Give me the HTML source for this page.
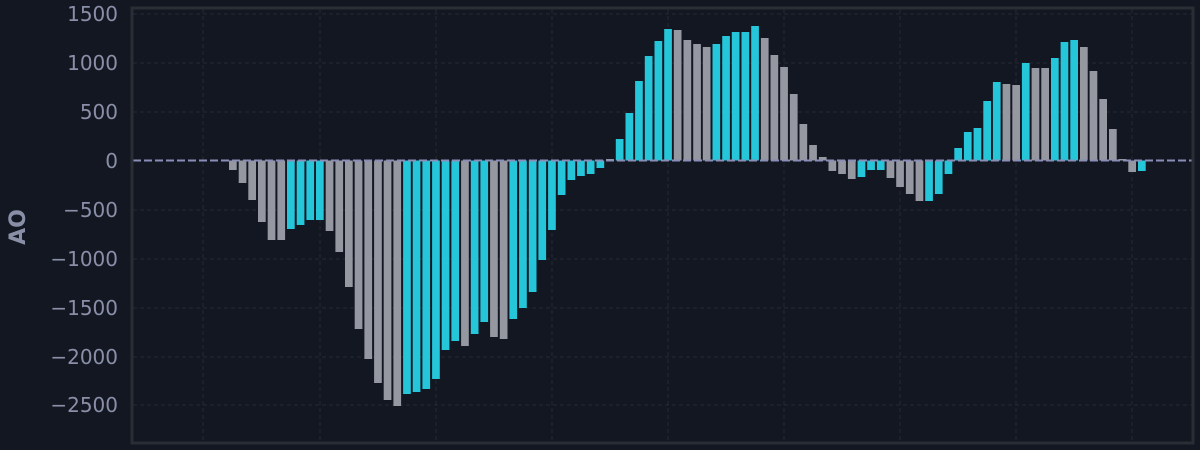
<!DOCTYPE html>
<html><head><meta charset="utf-8"><style>
html,body{margin:0;padding:0;background:#131722;}
svg{display:block;}
text{font-family:"DejaVu Sans","Liberation Sans",sans-serif;fill:#8a8fa8;}
</style></head><body>
<svg width="1200" height="450" viewBox="0 0 1200 450" xmlns="http://www.w3.org/2000/svg">
<rect width="1200" height="450" fill="#131722"/>
<g stroke="#262a33" stroke-width="1" stroke-dasharray="4,3">
<line x1="133" x2="1193" y1="14" y2="14"/><line x1="133" x2="1193" y1="63" y2="63"/><line x1="133" x2="1193" y1="112" y2="112"/><line x1="133" x2="1193" y1="210" y2="210"/><line x1="133" x2="1193" y1="259" y2="259"/><line x1="133" x2="1193" y1="308" y2="308"/><line x1="133" x2="1193" y1="357" y2="357"/><line x1="133" x2="1193" y1="405" y2="405"/>
<line y1="9" y2="443" x1="203" x2="203"/><line y1="9" y2="443" x1="320" x2="320"/><line y1="9" y2="443" x1="436" x2="436"/><line y1="9" y2="443" x1="552" x2="552"/><line y1="9" y2="443" x1="668" x2="668"/><line y1="9" y2="443" x1="784" x2="784"/><line y1="9" y2="443" x1="900" x2="900"/><line y1="9" y2="443" x1="1016" x2="1016"/><line y1="9" y2="443" x1="1132" x2="1132"/>
</g>
<g>
<rect x="229.0" y="160.5" width="7.7" height="9.5" fill="#9598a1"/>
<rect x="238.7" y="160.5" width="7.7" height="22.5" fill="#9598a1"/>
<rect x="248.3" y="160.5" width="7.7" height="39.5" fill="#9598a1"/>
<rect x="258.0" y="160.5" width="7.7" height="61.5" fill="#9598a1"/>
<rect x="267.7" y="160.5" width="7.7" height="79.5" fill="#9598a1"/>
<rect x="277.4" y="160.5" width="7.7" height="79.5" fill="#9598a1"/>
<rect x="287.0" y="160.5" width="7.7" height="68.5" fill="#26c6da"/>
<rect x="296.7" y="160.5" width="7.7" height="64.5" fill="#26c6da"/>
<rect x="306.4" y="160.5" width="7.7" height="59.5" fill="#26c6da"/>
<rect x="316.0" y="160.5" width="7.7" height="59.5" fill="#26c6da"/>
<rect x="325.7" y="160.5" width="7.7" height="70.5" fill="#9598a1"/>
<rect x="335.4" y="160.5" width="7.7" height="91.5" fill="#9598a1"/>
<rect x="345.0" y="160.5" width="7.7" height="126.5" fill="#9598a1"/>
<rect x="354.7" y="160.5" width="7.7" height="168.5" fill="#9598a1"/>
<rect x="364.4" y="160.5" width="7.7" height="198.5" fill="#9598a1"/>
<rect x="374.1" y="160.5" width="7.7" height="222.5" fill="#9598a1"/>
<rect x="383.7" y="160.5" width="7.7" height="239.5" fill="#9598a1"/>
<rect x="393.4" y="160.5" width="7.7" height="245.5" fill="#9598a1"/>
<rect x="403.1" y="160.5" width="7.7" height="233.5" fill="#26c6da"/>
<rect x="412.7" y="160.5" width="7.7" height="231.5" fill="#26c6da"/>
<rect x="422.4" y="160.5" width="7.7" height="228.5" fill="#26c6da"/>
<rect x="432.1" y="160.5" width="7.7" height="218.5" fill="#26c6da"/>
<rect x="441.7" y="160.5" width="7.7" height="189.5" fill="#26c6da"/>
<rect x="451.4" y="160.5" width="7.7" height="180.5" fill="#26c6da"/>
<rect x="461.1" y="160.5" width="7.7" height="185.5" fill="#9598a1"/>
<rect x="470.8" y="160.5" width="7.7" height="173.5" fill="#26c6da"/>
<rect x="480.4" y="160.5" width="7.7" height="161.5" fill="#26c6da"/>
<rect x="490.1" y="160.5" width="7.7" height="176.5" fill="#9598a1"/>
<rect x="499.8" y="160.5" width="7.7" height="178.5" fill="#9598a1"/>
<rect x="509.4" y="160.5" width="7.7" height="158.5" fill="#26c6da"/>
<rect x="519.1" y="160.5" width="7.7" height="147.5" fill="#26c6da"/>
<rect x="528.8" y="160.5" width="7.7" height="131.5" fill="#26c6da"/>
<rect x="538.4" y="160.5" width="7.7" height="99.5" fill="#26c6da"/>
<rect x="548.1" y="160.5" width="7.7" height="69.5" fill="#26c6da"/>
<rect x="557.8" y="160.5" width="7.7" height="34.5" fill="#26c6da"/>
<rect x="567.5" y="160.5" width="7.7" height="19.5" fill="#26c6da"/>
<rect x="577.1" y="160.5" width="7.7" height="15.5" fill="#26c6da"/>
<rect x="586.8" y="160.5" width="7.7" height="13.5" fill="#26c6da"/>
<rect x="596.5" y="160.5" width="7.7" height="7.5" fill="#26c6da"/>
<rect x="606.1" y="159" width="7.7" height="1.5" fill="#9598a1"/>
<rect x="615.8" y="139" width="7.7" height="21.5" fill="#26c6da"/>
<rect x="625.5" y="113" width="7.7" height="47.5" fill="#26c6da"/>
<rect x="635.1" y="81" width="7.7" height="79.5" fill="#26c6da"/>
<rect x="644.8" y="56" width="7.7" height="104.5" fill="#26c6da"/>
<rect x="654.5" y="41" width="7.7" height="119.5" fill="#26c6da"/>
<rect x="664.2" y="29" width="7.7" height="131.5" fill="#26c6da"/>
<rect x="673.8" y="30" width="7.7" height="130.5" fill="#9598a1"/>
<rect x="683.5" y="40" width="7.7" height="120.5" fill="#9598a1"/>
<rect x="693.2" y="44" width="7.7" height="116.5" fill="#9598a1"/>
<rect x="702.8" y="47" width="7.7" height="113.5" fill="#9598a1"/>
<rect x="712.5" y="44" width="7.7" height="116.5" fill="#26c6da"/>
<rect x="722.2" y="36" width="7.7" height="124.5" fill="#26c6da"/>
<rect x="731.8" y="32" width="7.7" height="128.5" fill="#26c6da"/>
<rect x="741.5" y="32" width="7.7" height="128.5" fill="#26c6da"/>
<rect x="751.2" y="26" width="7.7" height="134.5" fill="#26c6da"/>
<rect x="760.9" y="38" width="7.7" height="122.5" fill="#9598a1"/>
<rect x="770.5" y="55" width="7.7" height="105.5" fill="#9598a1"/>
<rect x="780.2" y="67" width="7.7" height="93.5" fill="#9598a1"/>
<rect x="789.9" y="94" width="7.7" height="66.5" fill="#9598a1"/>
<rect x="799.5" y="124" width="7.7" height="36.5" fill="#9598a1"/>
<rect x="809.2" y="145" width="7.7" height="15.5" fill="#9598a1"/>
<rect x="818.9" y="157" width="7.7" height="3.5" fill="#9598a1"/>
<rect x="828.5" y="160.5" width="7.7" height="10.5" fill="#9598a1"/>
<rect x="838.2" y="160.5" width="7.7" height="13.5" fill="#9598a1"/>
<rect x="847.9" y="160.5" width="7.7" height="18.5" fill="#9598a1"/>
<rect x="857.6" y="160.5" width="7.7" height="16.5" fill="#26c6da"/>
<rect x="867.2" y="160.5" width="7.7" height="9.5" fill="#26c6da"/>
<rect x="876.9" y="160.5" width="7.7" height="9.5" fill="#26c6da"/>
<rect x="886.6" y="160.5" width="7.7" height="17.5" fill="#9598a1"/>
<rect x="896.2" y="160.5" width="7.7" height="26.5" fill="#9598a1"/>
<rect x="905.9" y="160.5" width="7.7" height="33.5" fill="#9598a1"/>
<rect x="915.6" y="160.5" width="7.7" height="40.5" fill="#9598a1"/>
<rect x="925.2" y="160.5" width="7.7" height="40.5" fill="#26c6da"/>
<rect x="934.9" y="160.5" width="7.7" height="33.5" fill="#26c6da"/>
<rect x="944.6" y="160.5" width="7.7" height="13.5" fill="#26c6da"/>
<rect x="954.3" y="148" width="7.7" height="12.5" fill="#26c6da"/>
<rect x="963.9" y="132" width="7.7" height="28.5" fill="#26c6da"/>
<rect x="973.6" y="128" width="7.7" height="32.5" fill="#26c6da"/>
<rect x="983.3" y="101" width="7.7" height="59.5" fill="#26c6da"/>
<rect x="992.9" y="82" width="7.7" height="78.5" fill="#26c6da"/>
<rect x="1002.6" y="84" width="7.7" height="76.5" fill="#9598a1"/>
<rect x="1012.3" y="85" width="7.7" height="75.5" fill="#9598a1"/>
<rect x="1021.9" y="63" width="7.7" height="97.5" fill="#26c6da"/>
<rect x="1031.6" y="68" width="7.7" height="92.5" fill="#9598a1"/>
<rect x="1041.3" y="68" width="7.7" height="92.5" fill="#9598a1"/>
<rect x="1051.0" y="58" width="7.7" height="102.5" fill="#26c6da"/>
<rect x="1060.6" y="42" width="7.7" height="118.5" fill="#26c6da"/>
<rect x="1070.3" y="40" width="7.7" height="120.5" fill="#26c6da"/>
<rect x="1080.0" y="47" width="7.7" height="113.5" fill="#9598a1"/>
<rect x="1089.6" y="71" width="7.7" height="89.5" fill="#9598a1"/>
<rect x="1099.3" y="99" width="7.7" height="61.5" fill="#9598a1"/>
<rect x="1109.0" y="129" width="7.7" height="31.5" fill="#9598a1"/>
<rect x="1118.6" y="159" width="7.7" height="1.5" fill="#9598a1"/>
<rect x="1128.3" y="160.5" width="7.7" height="11.5" fill="#9598a1"/>
<rect x="1138.0" y="160.5" width="7.7" height="10.5" fill="#26c6da"/>
</g>
<line x1="133" x2="1193" y1="160.5" y2="160.5" stroke="#8a8db5" stroke-width="2" stroke-dasharray="8,3"/>
<rect x="132" y="8" width="1061" height="435" fill="none" stroke="#2a2d33" stroke-width="3"/>
<g font-size="20" text-anchor="end">
<text x="118" y="21">1500</text>
<text x="118" y="70">1000</text>
<text x="118" y="119">500</text>
<text x="118" y="168">0</text>
<text x="118" y="217">−500</text>
<text x="118" y="266">−1000</text>
<text x="118" y="315">−1500</text>
<text x="118" y="364">−2000</text>
<text x="118" y="412">−2500</text>
</g>
<text x="0" y="0" font-size="22" font-weight="bold" text-anchor="middle" transform="translate(25,227) rotate(-90)">AO</text>
</svg>
</body></html>
